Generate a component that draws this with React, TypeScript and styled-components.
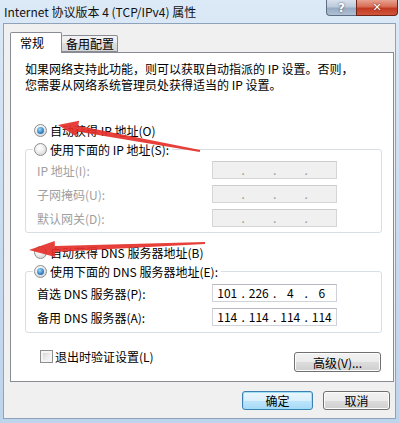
import styled, { createGlobalStyle } from "styled-components";

const GlobalStyle = createGlobalStyle`
  html, body { margin: 0; padding: 0; overflow: hidden; background: #fff; }
  body {
    font-family: "Noto Sans CJK SC", "Noto Sans", sans-serif;
    font-size: 12px;
    color: #000;
  }
  * { box-sizing: border-box; }
`;

const Window = styled.div`
  position: relative;
  width: 399px;
  height: 423px;
  display: flex;
  flex-direction: column;
  background: linear-gradient(to bottom, #dce9f7 0%, #cddff2 40%, #bdd4ed 100%);
`;

const TitleBar = styled.div`
  height: 23px;
  flex: none;
  display: flex;
  align-items: flex-start;
`;

const Title = styled.div`
  padding-left: 4px;
  line-height: 24px;
  font-size: 12px;
  color: #111;
`;

const Caption = styled.div`
  position: relative;
  z-index: 20;
  margin-left: auto;
  margin-right: 1px;
  display: flex;
  height: 16px;
`;

const CaptionGlyph = styled.span`
  font-family: "DejaVu Sans", sans-serif;
  font-weight: bold;
  color: #ffffff;
`;

const HelpButton = styled.span`
  display: flex;
  width: 30px;
  height: 16px;
  align-items: center;
  justify-content: center;
  font-size: 12px;
  border: 1px solid #5f6e82;
  border-top: 0;
  border-right: 0;
  border-radius: 0 0 0 4px;
  background: #a3b4ca linear-gradient(#d8e1ec, #bccadb 45%, #98abc3 55%, #b0c0d4);
  text-shadow: 0 0 2px #2a3a50;
`;

const CloseButton = styled.span`
  display: flex;
  width: 42px;
  height: 16px;
  align-items: center;
  justify-content: center;
  font-size: 11px;
  border: 1px solid #6e2418;
  border-top: 0;
  border-radius: 0 0 4px 0;
  background: #c94a32 linear-gradient(#e7a291, #d86c55 45%, #c13a22 55%, #d0553a);
  text-shadow: 0 0 2px #5a1208;
`;

const Body = styled.div`
  flex: 1;
  margin: 0 3px 4px 3px;
  border: 1px solid #8ea2ba;
  background: #f0f0f0;
  padding: 8px 2px 0 6px;
  display: flex;
  flex-direction: column;
`;

const TabStrip = styled.div`
  height: 21px;
  margin-bottom: -1px;
  display: flex;
  align-items: flex-end;
`;

const Tab = styled.div<{ $active?: boolean }>`
  position: relative;
  z-index: ${(p) => (p.$active ? 2 : 0)};
  width: ${(p) => (p.$active ? 52 : 56)}px;
  height: ${(p) => (p.$active ? 21 : 17)}px;
  margin-bottom: ${(p) => (p.$active ? 0 : 1)}px;
  padding-left: ${(p) => (p.$active ? 9 : 4)}px;
  line-height: ${(p) => (p.$active ? 20 : 16)}px;
  border: 1px solid #898c95;
  border-bottom: ${(p) => (p.$active ? "none" : "1px solid #898c95")};
  border-left: ${(p) => (p.$active ? "1px solid #898c95" : "none")};
  border-radius: 2px 2px 0 0;
  background: ${(p) =>
    p.$active ? "#fff" : "linear-gradient(to bottom, #f3f3f3 0%, #ebebeb 50%, #dedede 50%, #d6d6d6 100%)"};
`;

const Panel = styled.div`
  position: relative;
  z-index: 1;
  width: 384px;
  height: 330px;
  border: 1px solid #898c95;
  background: #fff;
  padding: 8px 11px 0 14px;
  display: flex;
  flex-direction: column;
`;

const DescLine = styled.div`
  line-height: 16px;
  height: 16px;
  white-space: nowrap;
`;

const RadioRow = styled.div<{ $top: number }>`
  margin-top: ${(p) => p.$top}px;
  margin-left: 9px;
  height: 16px;
  display: flex;
  align-items: center;
  gap: 3px;
`;

const RadioMark = styled.span<{ $on?: boolean }>`
  position: relative;
  flex: none;
  width: 13px;
  height: 13px;
  border-radius: 50%;
  border: 1px solid #8e8f8f;
  background: radial-gradient(circle at 40% 35%, #ffffff 0%, #f0f0f0 40%, #c8c8c8 100%);
  &::after {
    content: "";
    display: ${(p) => (p.$on ? "block" : "none")};
    position: absolute;
    left: 2px;
    top: 2px;
    width: 7px;
    height: 7px;
    border-radius: 50%;
    background: radial-gradient(circle at 40% 35%, #9fdcf8 0%, #3a87c9 55%, #1c4f90 100%);
  }
`;

const Group = styled.fieldset<{ $top: number; $pad: number }>`
  margin: ${(p) => p.$top}px 0 0 0;
  width: 357px;
  min-width: 0;
  border: 1px solid #d5dfe5;
  border-radius: 3px;
  padding: ${(p) => p.$pad}px 0 ${(p) => p.$pad + 1}px 11px;
  display: flex;
  flex-direction: column;
  gap: 6px;
`;

const Legend = styled.legend`
  margin-left: -4px;
  padding: 0 3px 0 1px;
  height: 16px;
  display: flex;
  align-items: center;
  gap: 3px;
`;

const FieldRow = styled.div`
  height: 18px;
  display: flex;
  align-items: center;
`;

const FieldLabel = styled.span<{ $disabled?: boolean }>`
  width: 175px;
  color: ${(p) => (p.$disabled ? "#a0a0a0" : "#000")};
`;

const IpBox = styled.div<{ $disabled?: boolean }>`
  width: 125px;
  height: 18px;
  display: flex;
  align-items: center;
  border: 1px solid ${(p) => (p.$disabled ? "#d6d6d6" : "#cfd3d9")};
  border-top-color: ${(p) => (p.$disabled ? "#cccccc" : "#b5b8bf")};
  background: ${(p) => (p.$disabled ? "#f0f0f0" : "#fff")};
  color: ${(p) => (p.$disabled ? "#9a9a9a" : "#000")};
`;

const Octet = styled.span`
  flex: 1;
  text-align: center;
  line-height: 16px;
`;

const Dot = styled.span`
  width: 3px;
  text-align: center;
  line-height: 16px;
`;

const BottomRow = styled.div`
  margin-top: 16px;
  display: flex;
  align-items: flex-start;
`;

const CheckLabel = styled.label`
  margin-left: 15px;
  height: 14px;
  display: flex;
  align-items: center;
  gap: 2px;
`;

const CheckMark = styled.span`
  width: 13px;
  height: 13px;
  border: 1px solid #8e8f8f;
  background: linear-gradient(135deg, #cfcfcf 0%, #eeeeee 60%, #fafafa 100%);
  box-shadow: inset 0 0 0 2px #f4f4f4;
`;

const Button = styled.div<{ $width: number; $primary?: boolean }>`
  width: ${(p) => p.$width}px;
  height: 19px;
  display: flex;
  align-items: center;
  justify-content: center;
  border: 1px solid ${(p) => (p.$primary ? "#3c7fb1" : "#707070")};
  border-radius: 3px;
  box-shadow: inset 0 0 0 1px ${(p) => (p.$primary ? "#9fe0f9" : "#fcfcfc")};
  background: ${(p) =>
    p.$primary
      ? "linear-gradient(to bottom, #eaf6fd 0%, #d9f0fc 50%, #bee6fd 50%, #a7d9f5 100%)"
      : "linear-gradient(to bottom, #f2f2f2 0%, #ebebeb 50%, #dddddd 50%, #cfcfcf 100%)"};
`;

const AdvancedButton = styled(Button)`
  margin-left: auto;
  margin-top: 3px;
  margin-right: 1px;
  height: 20px;
`;

const Footer = styled.div`
  margin-top: 9px;
  margin-right: 3px;
  display: flex;
  justify-content: flex-end;
  gap: 10px;
`;

const Overlay = styled.svg`
  position: absolute;
  z-index: 10;
  left: 0;
  top: 0;
  pointer-events: none;
`;

function Radio({ on, label }: { on?: boolean; label: string }) {
  return (
    <>
      <RadioMark $on={on} />
      <span>{label}</span>
    </>
  );
}

function IpField({ label, octets, disabled }: { label: string; octets: string[]; disabled?: boolean }) {
  return (
    <FieldRow>
      <FieldLabel $disabled={disabled}>{label}</FieldLabel>
      <IpBox $disabled={disabled}>
        <Octet>{octets[0]}</Octet>
        <Dot>.</Dot>
        <Octet>{octets[1]}</Octet>
        <Dot>.</Dot>
        <Octet>{octets[2]}</Octet>
        <Dot>.</Dot>
        <Octet>{octets[3]}</Octet>
      </IpBox>
    </FieldRow>
  );
}

const empty = ["", "", "", ""];

export default function App() {
  return (
    <>
      <GlobalStyle />
      <Window>
        <TitleBar>
          <Title>Internet 协议版本 4 (TCP/IPv4) 属性</Title>
          <Caption>
            <HelpButton>
              <CaptionGlyph>?</CaptionGlyph>
            </HelpButton>
            <CloseButton>
              <CaptionGlyph>✕</CaptionGlyph>
            </CloseButton>
          </Caption>
        </TitleBar>
        <Body>
          <TabStrip>
            <Tab $active>常规</Tab>
            <Tab>备用配置</Tab>
          </TabStrip>
          <Panel>
            <DescLine>如果网络支持此功能，则可以获取自动指派的 IP 设置。否则，</DescLine>
            <DescLine>您需要从网络系统管理员处获得适当的 IP 设置。</DescLine>
            <RadioRow $top={29}>
              <Radio on label="自动获得 IP 地址(O)" />
            </RadioRow>
            <Group $top={3} $pad={4}>
              <Legend>
                <Radio label="使用下面的 IP 地址(S):" />
              </Legend>
              <IpField disabled label="IP 地址(I):" octets={empty} />
              <IpField disabled label="子网掩码(U):" octets={empty} />
              <IpField disabled label="默认网关(D):" octets={empty} />
            </Group>
            <RadioRow $top={11}>
              <Radio label="自动获得 DNS 服务器地址(B)" />
            </RadioRow>
            <Group $top={3} $pad={5}>
              <Legend>
                <Radio on label="使用下面的 DNS 服务器地址(E):" />
              </Legend>
              <IpField label="首选 DNS 服务器(P):" octets={["101", "226", "4", "6"]} />
              <IpField label="备用 DNS 服务器(A):" octets={["114", "114", "114", "114"]} />
            </Group>
            <BottomRow>
              <CheckLabel>
                <CheckMark />
                <span>退出时验证设置(L)</span>
              </CheckLabel>
              <AdvancedButton $width={87}>高级(V)...</AdvancedButton>
            </BottomRow>
          </Panel>
          <Footer>
            <Button $width={71} $primary>确定</Button>
            <Button $width={67}>取消</Button>
          </Footer>
        </Body>
        <Overlay width={399} height={423} viewBox="0 0 399 423">
          <g fill="#e5302a" opacity={0.92}>
            <polygon points="200.2,150 199.8,152 77.2,131.6 78.2,125.7" />
            <polygon points="58,125 79.1,120.7 76.3,136.5" />
            <polygon points="205,242 205,244 55,252 55,246" />
            <polygon points="29,250 54.7,241 55.3,257" />
          </g>
        </Overlay>
      </Window>
    </>
  );
}
